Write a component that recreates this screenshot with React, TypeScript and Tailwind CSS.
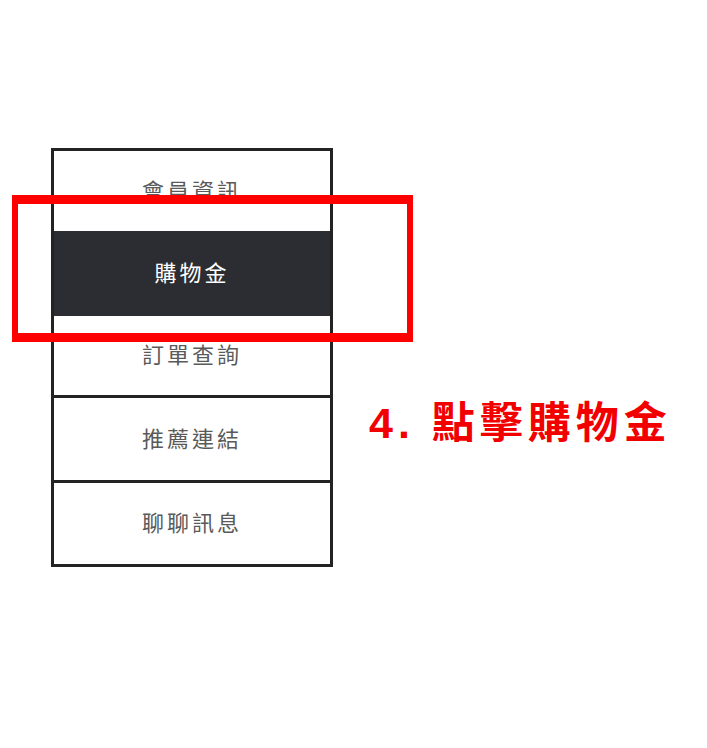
import React from 'react';

const items = [
  { label: '會員資訊', h: 'h-[80px]' },
  { label: '購物金', h: 'h-[85px]', active: true },
  { label: '訂單查詢', h: 'h-[82px]', divider: true },
  { label: '推薦連結', h: 'h-[85px]', divider: true },
  { label: '聊聊訊息', h: 'h-[81px]' },
];

export default function App() {
  return (
    <div
      className="relative w-[707px] h-[748px] bg-white overflow-hidden"
      style={{ fontFamily: '"Liberation Sans", "Noto Sans CJK TC", sans-serif' }}
    >
      <div className="flex items-start pt-[148px] pl-[51px]">
        {/* side menu */}
        <ul className="w-[282px] border-[3px] border-[#232323] flex flex-col">
          {items.map((it) => (
            <li
              key={it.label}
              className={`${it.h} flex items-center justify-center text-[22px] tracking-[3px] ${
                it.active ? 'bg-[#2c2d32] text-white' : 'bg-white text-[#5a5a5a]'
              } ${it.divider ? 'border-b-[3px] border-[#232323]' : ''}`}
            >
              {it.label}
            </li>
          ))}
        </ul>

        {/* step hint */}
        <div className="ml-[36px] mt-[254px] text-[43px] leading-none font-bold tracking-[5px] text-[#f20000] whitespace-nowrap">
          4. 點擊購物金
        </div>
      </div>

      {/* highlight frame */}
      <div className="absolute left-[12px] top-[195px] w-[401px] h-[147px] border-x-[6px] border-y-[9px] border-[#ff0000] pointer-events-none" />
    </div>
  );
}
